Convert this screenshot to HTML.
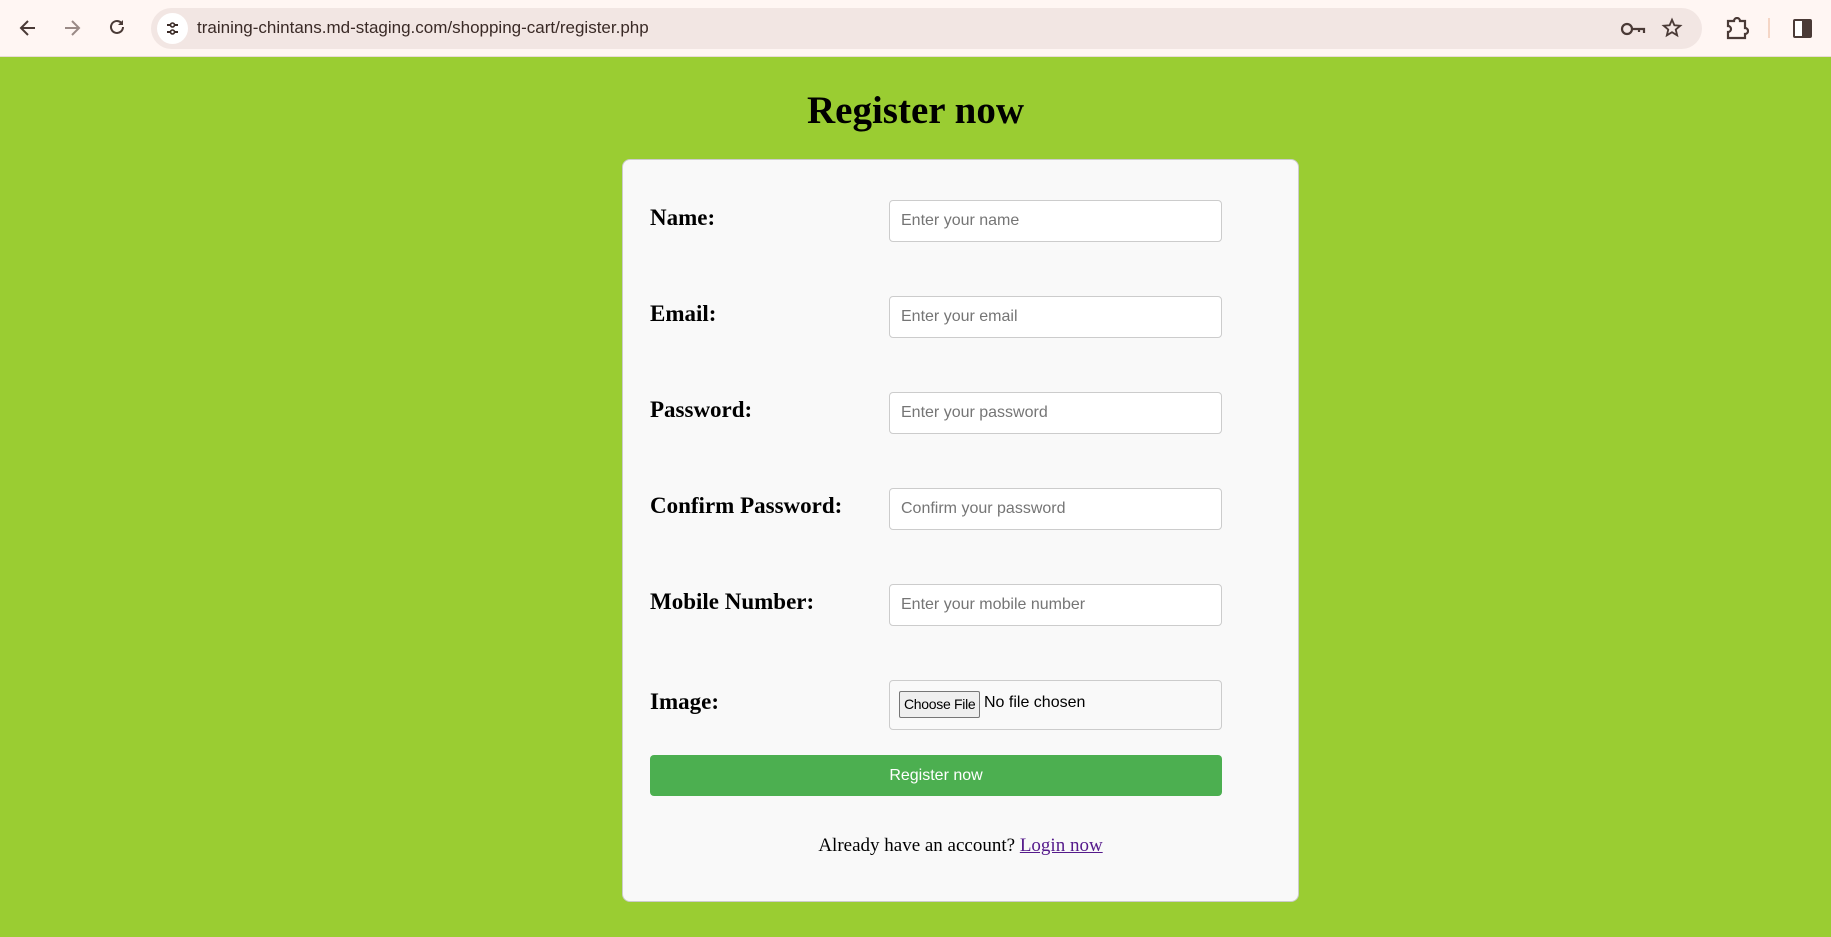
<!DOCTYPE html>
<html><head><meta charset="utf-8"><style>
*{box-sizing:border-box;margin:0;padding:0}
body{width:1831px;height:937px;overflow:hidden;background:#9acd32;font-family:"Liberation Serif",serif;position:relative}
.bar{position:absolute;left:0;top:0;width:1831px;height:57px;background:#fff6f3;border-bottom:1px solid #e8dcd6}
.url{position:absolute;left:151px;top:8px;width:1551px;height:41px;border-radius:21px;background:#f2e6e3}
.url span{position:absolute;left:46px;top:10px;font:17px "Liberation Sans",sans-serif;color:#3a2a26}
.tune{position:absolute;left:6px;top:5px;width:31px;height:31px;border-radius:50%;background:#fff}
h1{position:absolute;left:0;width:1831px;top:88px;text-align:center;font-size:39px;font-weight:bold;color:#000}
.card{position:absolute;left:622px;top:159px;width:677px;height:743px;background:#f9f9f9;border:1px solid #ccc;border-radius:8px}
.lbl{position:absolute;left:27px;font-size:23px;font-weight:bold;color:#000;white-space:nowrap}
.in{position:absolute;left:266px;width:333px;height:42px;background:#fff;border:1px solid #ccc;border-radius:4px;font:16px "Liberation Sans",sans-serif;color:#757575;padding:11px 0 0 11px;white-space:nowrap}
.file{height:50px;background:#f9f9f9;color:#000;padding:0}
.cf{position:absolute;left:9px;top:10px;width:81px;height:27px;background:#efefef;border:1px solid #767676;border-radius:2px;font:14px "Liberation Sans",sans-serif;letter-spacing:-0.3px;padding:4px 0 0 4px;color:#000;white-space:nowrap;overflow:hidden}
.nf{position:absolute;left:94px;top:13px;font:16px "Liberation Sans",sans-serif;color:#000;white-space:nowrap}
.btn{position:absolute;left:27px;top:595px;width:572px;height:41px;background:#4caf50;border-radius:4px;color:#fff;font:16px "Liberation Sans",sans-serif;text-align:center;line-height:41px}
.ft{position:absolute;left:0;width:675px;top:675px;text-align:center;font-size:19px;color:#000}
.ft a{color:#551a8b;text-decoration:underline}
</style></head><body>
<div class="bar">
<svg style="position:absolute;left:18px;top:18px" width="20" height="20" viewBox="0 0 20 20"><path d="M17 10H4M10 3L3 10l7 7" stroke="#4a3a36" stroke-width="2" fill="none"/></svg>
<svg style="position:absolute;left:62px;top:18px" width="20" height="20" viewBox="0 0 20 20"><path d="M3 10h13M10 3l7 7-7 7" stroke="#9a8a86" stroke-width="2" fill="none"/></svg>
<svg style="position:absolute;left:107px;top:17px" width="20" height="20" viewBox="0 0 20 20"><path d="M16 10a6 6 0 1 1-2-4.5" stroke="#4a3a36" stroke-width="2" fill="none"/><path d="M16 3v5h-5" fill="#4a3a36"/></svg>
<div class="url"><div class="tune"><svg width="31" height="31" viewBox="0 0 31 31"><path d="M10 12h4M17 12h4M10 19h4M17 19h4" stroke="#3a2a26" stroke-width="2"/><circle cx="15.5" cy="12" r="2" fill="none" stroke="#3a2a26" stroke-width="1.6"/><circle cx="15.5" cy="19" r="2" fill="none" stroke="#3a2a26" stroke-width="1.6"/></svg></div><span>training-chintans.md-staging.com/shopping-cart/register.php</span></div>
<svg style="position:absolute;left:1620px;top:19px" width="26" height="20" viewBox="0 0 26 20"><circle cx="7" cy="10" r="5" fill="none" stroke="#4a3a36" stroke-width="2.2"/><path d="M12 10h12v4M19 10v3" stroke="#4a3a36" stroke-width="2.2" fill="none"/></svg>
<svg style="position:absolute;left:1661px;top:17px" width="22" height="22" viewBox="0 0 24 24"><path d="M12 3l2.6 6 6.4.5-4.9 4.2 1.5 6.3L12 16.6 6.4 20l1.5-6.3L3 9.5 9.4 9z" fill="none" stroke="#4a3a36" stroke-width="2"/></svg>
<svg style="position:absolute;left:1725px;top:17px" width="24" height="24" viewBox="0 0 24 24"><path d="M3 4h6a3 3 0 0 1 6 0h5v7a3 3 0 0 1 0 6v4H3v-6a3 3 0 0 0 0-6z" fill="none" stroke="#4a3a36" stroke-width="2.2"/></svg>
<div style="position:absolute;left:1768px;top:18px;width:2px;height:20px;background:#f5d6c6"></div>
<div style="position:absolute;left:1793px;top:19px;width:19px;height:19px;border:2.5px solid #4a3a36;border-radius:2px;background:linear-gradient(90deg,#fff 45%,#4a3a36 45%)"></div>
</div>
<h1>Register now</h1>
<div class="card">
<div class="lbl" style="top:45px">Name:</div><div class="in" style="top:40px">Enter your name</div>
<div class="lbl" style="top:141px">Email:</div><div class="in" style="top:136px">Enter your email</div>
<div class="lbl" style="top:237px">Password:</div><div class="in" style="top:232px">Enter your password</div>
<div class="lbl" style="top:333px">Confirm Password:</div><div class="in" style="top:328px">Confirm your password</div>
<div class="lbl" style="top:429px">Mobile Number:</div><div class="in" style="top:424px">Enter your mobile number</div>
<div class="lbl" style="top:529px">Image:</div><div class="in file" style="top:520px"><div class="cf">Choose File</div><div class="nf">No file chosen</div></div>
<div class="btn">Register now</div>
<div class="ft">Already have an account? <a>Login now</a></div>
</div>
</body></html>
